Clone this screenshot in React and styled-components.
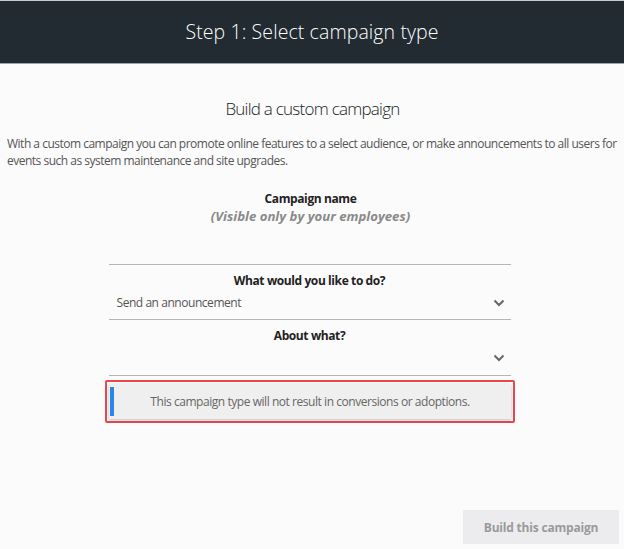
import React from 'react';
import styled, { createGlobalStyle } from 'styled-components';

const Global = createGlobalStyle`
  html, body {
    margin: 0;
    padding: 0;
    background: #fbfbfb;
    font-family: "Open Sans", "Liberation Sans", sans-serif;
  }
`;

const Page = styled.div`
  width: 624px;
  height: 549px;
  display: flex;
  flex-direction: column;
  overflow: hidden;
`;

const Header = styled.header`
  height: 62px;
  background: #222b31;
  border-top: 1px solid #c9cbcc;
  border-bottom: 1px solid #9ea3a6;
  display: flex;
  align-items: center;
  justify-content: center;
`;

const HeaderTitle = styled.h1`
  margin: 0 0 2px;
  color: #fff;
  font-weight: 300;
  font-size: 19.5px;
  letter-spacing: 0.1px;
`;

const Content = styled.main`
  flex: 1;
  display: flex;
  flex-direction: column;
  align-items: center;
  padding: 33px 6px 0 7px;
`;

const Title = styled.h2`
  margin: 0;
  font-weight: 300;
  font-size: 17px;
  letter-spacing: -0.75px;
  color: #222;
  line-height: 24px;
`;

const Intro = styled.p`
  margin: 14px 0 0;
  align-self: stretch;
  font-size: 12px;
  letter-spacing: -0.5px;
  line-height: 17px;
  color: #555;
`;

const Label = styled.div`
  font-size: 12px;
  font-weight: 700;
  letter-spacing: -0.4px;
  color: #222;
  text-align: center;
  line-height: 17px;
`;

const Hint = styled.div`
  font-size: 13.2px;
  font-weight: 700;
  font-style: italic;
  color: #8a8a8a;
  text-align: center;
  line-height: 18px;
`;

const NameBlock = styled.div`
  margin-top: 21px;
  margin-right: 4px;
`;

const Form = styled.div`
  width: 402px;
  margin-top: 39px;
  margin-right: 6px;
  display: flex;
  flex-direction: column;
`;

const Field = styled.div`
  border-top: 1px solid #b5b5b5;
  padding-top: 7px;
  ${p => p.$last && 'border-bottom: 1px solid #b5b5b5;'}
`;

const SelectRow = styled.div`
  height: ${p => p.$h || 31}px;
  box-sizing: border-box;
  padding: 0 6px 3px 8px;
  display: flex;
  align-items: center;
  justify-content: space-between;
  font-size: 12px;
  letter-spacing: -0.45px;
  color: #555;
`;

const Notice = styled.div`
  margin: 4px -4px 0;
  padding: 2px;
  border: 2px solid #e8484d;
  border-radius: 2px;
`;

const NoticeBody = styled.div`
  height: 35px;
  background: #efefef;
  box-shadow: 0 1px 3px rgba(0, 0, 0, 0.25);
  display: flex;
  align-items: center;
`;

const NoticeBar = styled.span`
  width: 4px;
  align-self: stretch;
  margin: 3px 0 3px 1px;
  background: #2a86e8;
`;

const NoticeText = styled.span`
  flex: 1;
  text-align: center;
  font-size: 12px;
  letter-spacing: -0.45px;
  color: #666;
  padding-right: 4px;
`;

const Footer = styled.div`
  display: flex;
  justify-content: flex-end;
  padding: 0 5px 5px 0;
`;

const Button = styled.button`
  width: 156px;
  height: 34px;
  border: none;
  background: #ececee;
  color: #9a9a9a;
  font-family: inherit;
  font-size: 12px;
  font-weight: 700;
  letter-spacing: -0.2px;
`;

const Chevron = () => (
  <svg width="12" height="8" viewBox="0 0 12 8">
    <path d="M1.5 1.5 L6 6 L10.5 1.5" fill="none" stroke="#666" strokeWidth="2" />
  </svg>
);

export default function App() {
  return (
    <Page>
      <Global />
      <Header>
        <HeaderTitle>Step 1: Select campaign type</HeaderTitle>
      </Header>
      <Content>
        <Title>Build a custom campaign</Title>
        <Intro>
          With a custom campaign you can promote online features to a select audience, or make announcements to all users for
          events such as system maintenance and site upgrades.
        </Intro>
        <NameBlock>
          <Label>Campaign name</Label>
          <Hint>(Visible only by your employees)</Hint>
        </NameBlock>
        <Form>
          <Field>
            <Label>What would you like to do?</Label>
            <SelectRow $h={30}>
              <span>Send an announcement</span>
              <Chevron />
            </SelectRow>
          </Field>
          <Field $last>
            <Label>About what?</Label>
            <SelectRow>
              <span />
              <Chevron />
            </SelectRow>
          </Field>
          <Notice>
            <NoticeBody>
              <NoticeBar />
              <NoticeText>This campaign type will not result in conversions or adoptions.</NoticeText>
            </NoticeBody>
          </Notice>
        </Form>
      </Content>
      <Footer>
        <Button>Build this campaign</Button>
      </Footer>
    </Page>
  );
}
